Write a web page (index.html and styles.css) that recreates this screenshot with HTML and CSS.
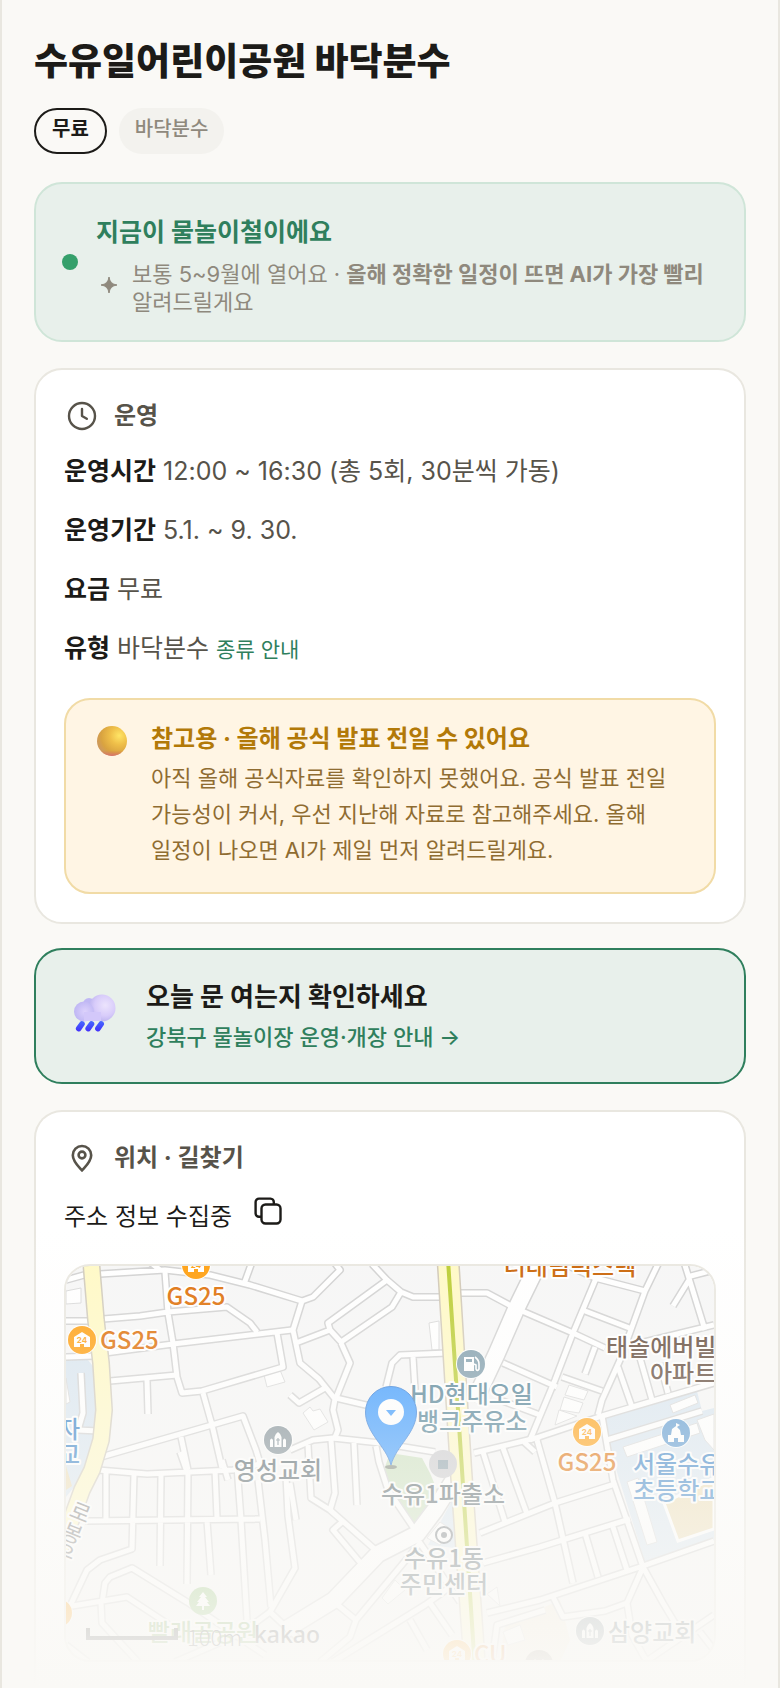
FILE: index.html
```html
<!DOCTYPE html>
<html lang="ko">
<head>
<meta charset="utf-8">
<meta name="viewport" content="width=device-width, initial-scale=1">
<title>수유일어린이공원 바닥분수</title>
<link rel="stylesheet" href="styles.css">
</head>
<body>
<main class="page">
  <h1 class="title">수유일어린이공원 바닥분수</h1>
  <div class="chips">
    <span class="chip chip-free">무료</span>
    <span class="chip">바닥분수</span>
  </div>

  <section class="season">
    <span class="season-dot"></span>
    <div class="season-body">
      <h2 class="season-title">지금이 물놀이철이에요</h2>
      <div class="season-note">
        <svg class="spark" viewBox="0 0 16 16" aria-hidden="true"><path d="M8 0 Q8.8 7.2 16 8 Q8.8 8.8 8 16 Q7.2 8.8 0 8 Q7.2 7.2 8 0Z" fill="#8f897d" stroke="#8f897d"/></svg>
        <p class="season-text">보통 5~9월에 열어요 · <strong>올해 정확한 일정이 뜨면 AI가 가장 빨리</strong> 알려드릴게요</p>
      </div>
    </div>
  </section>

  <section class="card">
    <h2 class="card-title">
      <svg class="card-icon" viewBox="0 0 36 36" fill="none" stroke="#57534a" stroke-width="2.4" stroke-linecap="round" stroke-linejoin="round" aria-hidden="true"><circle cx="18" cy="18" r="13"/><path d="M18 11v7l4.8 2.8"/></svg>
      운영
    </h2>
    <dl class="facts">
      <div class="fact"><dt>운영시간</dt> <dd>12:00 ~ 16:30 (총 5회, 30분씩 가동)</dd></div>
      <div class="fact"><dt>운영기간</dt> <dd>5.1. ~ 9. 30.</dd></div>
      <div class="fact"><dt>요금</dt> <dd>무료</dd></div>
      <div class="fact"><dt>유형</dt> <dd>바닥분수 <a class="kind-link" href="#kinds">종류 안내</a></dd></div>
    </dl>
    <div class="notice">
      <svg class="notice-icon" viewBox="0 0 30 30" aria-hidden="true">
        <defs>
          <radialGradient id="orb" cx=".74" cy=".32" r=".75"><stop offset="0" stop-color="#ffe566"/><stop offset=".4" stop-color="#efbf49"/><stop offset=".8" stop-color="#d9a340"/><stop offset="1" stop-color="#cf9a5a"/></radialGradient>
          <linearGradient id="orbLow" x1="0" y1="0" x2="0" y2="1"><stop offset=".82" stop-color="#d97757" stop-opacity="0"/><stop offset="1" stop-color="#d97070"/></linearGradient>
        </defs>
        <circle cx="15" cy="15" r="15" fill="url(#orb)"/><circle cx="15" cy="15" r="15" fill="url(#orbLow)"/>
      </svg>
      <div>
        <h3 class="notice-title">참고용 · 올해 공식 발표 전일 수 있어요</h3>
        <p class="notice-text">아직 올해 공식자료를 확인하지 못했어요. 공식 발표 전일 가능성이 커서, 우선 지난해 자료로 참고해주세요. 올해 일정이 나오면 AI가 제일 먼저 알려드릴게요.</p>
      </div>
    </div>
  </section>

  <a class="check" href="#official">
    <svg class="check-icon" viewBox="0 0 42 38" aria-hidden="true">
      <defs>
        <radialGradient id="cl1" cx=".62" cy=".4" r=".65"><stop offset="0" stop-color="#ece4fd"/><stop offset=".6" stop-color="#d8ccfa"/><stop offset="1" stop-color="#b9b1ee"/></radialGradient>
        <radialGradient id="cl2" cx=".55" cy=".5" r=".6"><stop offset="0" stop-color="#ddd2fc"/><stop offset="1" stop-color="#bcb4f3"/></radialGradient>
        <linearGradient id="drop" x1="0" y1="0" x2="0" y2="1"><stop offset="0" stop-color="#4468ff"/><stop offset="1" stop-color="#4431fa"/></linearGradient>
      </defs>
      <circle cx="15" cy="10" r="6" fill="#c0b8f4"/>
      <path d="M10 17h22v10H10z" fill="#d4c9fa"/>
      <circle cx="28" cy="14" r="13.500" fill="url(#cl1)"/>
      <circle cx="10" cy="17.500" r="10" fill="url(#cl2)"/>
      <path d="M10 18h17v9H10z" fill="#d3c8fa"/>
      <g fill="url(#drop)">
        <path d="M2.300 33 5.800 28.300a2.800 2.800 0 0 1 4.800 2.800L7.200 36A2.800 2.800 0 0 1 2.300 33Z"/>
        <path d="M11.800 33 15.300 28.300a2.800 2.800 0 0 1 4.800 2.800L16.700 36A2.800 2.800 0 0 1 11.800 33Z"/>
        <path d="M21.500 33 25 28.300a2.800 2.800 0 0 1 4.800 2.800L26.400 36A2.800 2.800 0 0 1 21.500 33Z"/>
      </g>
    </svg>
    <span class="check-body">
      <span class="check-title">오늘 문 여는지 확인하세요</span>
      <span class="check-sub">강북구 물놀이장 운영·개장 안내 →</span>
    </span>
  </a>

  <section class="card card-place">
    <h2 class="card-title">
      <svg class="card-icon" viewBox="0 0 36 36" fill="none" stroke="#57534a" stroke-width="2.600" stroke-linejoin="round" aria-hidden="true"><path d="M18 30.500C14 26 8.800 21.300 8.800 15.200a9.200 9.200 0 0 1 18.400 0C27.200 21.300 22 26 18 30.500Z"/><circle cx="18" cy="15" r="3.400"/></svg>
      위치 · 길찾기
    </h2>
    <div class="address">
      <span>주소 정보 수집중</span>
      <button class="copy" type="button" aria-label="주소 복사"><svg viewBox="0 0 28 28" fill="none" stroke="#1c1b18" stroke-width="2.400" stroke-linejoin="round" aria-hidden="true"><rect x="7.500" y="7.500" width="19" height="19" rx="4"/><path d="M7.500 19.800H5A3.400 3.400 0 0 1 1.600 16.500V5A3.400 3.400 0 0 1 5 1.600H16.500A3.400 3.400 0 0 1 19.800 5V7.500"/></svg></button>
    </div>
    <div class="map">
      <svg class="map-art" viewBox="66 1266 648 394" preserveAspectRatio="xMidYMid slice" role="img" aria-label="지도">
        <defs>
          <g id="lanes">
            <path d="M66 1280L84 1275M100 1274L165 1270L210 1275L250 1285L302 1301L313 1297L340 1270L334 1262M150 1262L160 1270M244 1284L252 1262"/>
            <path d="M165 1272L168 1313L173 1343L177 1377L182 1393L202 1391L283 1367L277 1333M103 1319L140 1316L168 1312L227 1307L250 1323L257 1332M105 1353L173 1344L292 1330M110 1381L177 1375M147 1380L148 1414"/>
            <path d="M101 1457L243 1416L256 1450L262 1470M203 1393L212 1425L222 1468M181 1437L188 1470M66 1321L92 1321M66 1357L94 1356M81 1373L83 1413L78 1430L98 1431"/>
            <path d="M302 1301L293 1330L300 1363L319 1379L335 1399L333 1410L338 1430L334 1440M296 1343L330 1330L328 1323L387 1280L372 1264M387 1280L401 1292L413 1297L442 1297M401 1292L392 1307L341 1342L330 1330M341 1343L350 1363L336 1398"/>
            <path d="M386 1387L392 1363L400 1355L447 1353M413 1357L415 1390M336 1398L370 1406M290 1395L299 1403L325 1388M290 1450L313 1440L333 1438L380 1443L435 1452"/>
            <path d="M308 1445L311 1498L330 1510L379 1553M331 1440L335 1493L330 1510M354 1443L357 1505M376 1446L379 1462L388 1490L417 1533M342 1522L333 1530L364 1567"/>
            <path d="M334 1602L356 1620L350 1637L320 1662M356 1620L420 1543L460 1602M333 1662L425 1605L457 1582M410 1620L427 1650M430 1603L452 1635"/>
            <path d="M98 1470L147 1474L233 1470L260 1464M85 1521L260 1519M106 1472V1520M134 1474L132 1549L100 1560L87 1570L70 1606M161 1474L160 1566M188 1472L187 1584M180 1452L187 1472M215 1470L217 1518M207 1521L211 1575M222 1460L228 1480M237 1466L241 1520L247 1620M258 1480L265 1540L271 1607M286 1476L288 1516L295 1568L270 1612L300 1640M290 1483L296 1520"/>
            <path d="M66 1607L127 1597L200 1645M102 1603L105 1583L110 1577L132 1568L187 1602L265 1655M101 1603L102 1623L138 1662M270 1612L240 1634L175 1662M66 1645L88 1662"/>
            <path d="M460 1293L487 1293L515 1308L573 1333L605 1348M503 1363L557 1387M597 1276L573 1333L555 1380L530 1440M560 1262L595 1278L645 1291M660 1260L645 1291L620 1360L602 1400L598 1415M585 1311L632 1329M595 1347L585 1374M562 1377L602 1391"/>
            <path d="M684 1262L705 1330M689 1280L673 1306M687 1277L714 1270M632 1345L714 1325M618 1367L632 1407M640 1358L652 1400M660 1363L668 1393M530 1440L602 1416L714 1383M607 1440L702 1411M474 1453L540 1437"/>
            <path d="M480 1533L555 1503L615 1484M483 1563L540 1547L630 1519M487 1613L540 1600L640 1567L714 1541M483 1452L505 1522M503 1448L527 1514M524 1442L535 1452M537 1440L555 1503L573 1583M585 1533L598 1577M613 1527L627 1570M602 1416L613 1480L643 1567"/>
            <path d="M643 1567L627 1603L605 1611L563 1617L553 1597M643 1567L663 1603L675 1623M627 1603L632 1635L647 1662M645 1662L714 1615M700 1632L714 1650M492 1662L497 1625L545 1610M500 1400L540 1415"/>
          </g>
          <g id="mains"><path d="M541 1258L517 1307L497 1353L474 1402M285 1630L334 1600L378 1554L417 1534L435 1510L455 1478"/></g>
          <g id="store"><circle r="15" fill="#fff"/><circle r="14" fill="#ff9d0a"/><path d="M-8 6V-3L0-8 8-3V7H2V4H-2V7H-8Z" fill="#fff"/><text y="3" text-anchor="middle" class="map-24">24</text></g>
          <g id="church"><circle r="15" fill="#fff"/><circle r="14" fill="#7b8a92"/><path d="M-3.500 7V-3Q-3-6 0-8 3-6 3.500-3V7ZM-8 7V0q1.500-3 3 0V7ZM5 7V0q1.500-3 3 0V7Z" fill="#fff"/><path d="M0-2V5M-2 0H2" stroke="#7b8a92" stroke-width="1.200"/></g>
        </defs>
        <rect x="60" y="1255" width="660" height="412" fill="#f6f6f6"/>
        <path d="M66 1360H88L96 1370 98 1430 92 1455 84 1475 66 1497ZM602 1417 697 1391 702 1411 714 1408V1540L645 1562 607 1440ZM455 1495V1548L428 1545Z" fill="#d8e5f0"/>
        <path d="M390 1453 422 1458 430 1473 437 1490V1507L418 1531 396 1503 382 1475Z" fill="#c9dfbc"/>
        <path d="M664 1503 714 1478V1529L678 1541Z" fill="#ecdcb2" stroke="#fff" stroke-width="3"/>
        <path d="M66 1466l6 20-6 4Z" fill="#ecdcb2"/>
        <path d="M505 1625 560 1600 570 1640 560 1662H500Z" fill="#f3ead8"/>
        <g fill="#fff" stroke="#d8d8d8">
          <path d="M66 1291 81 1288V1303L66 1304ZM264 1375 280 1370 285 1382 267 1387ZM429 1323 439 1321V1350L432 1350ZM303 1413 310 1407 313 1411 320 1409 328 1422 314 1430ZM569 1385 588 1391 584 1400 565 1395ZM564 1397 583 1403 579 1413 560 1410ZM559 1410 577 1416 555 1425ZM66 1378l4 24-4 2Z"/>
          <path d="M627 1482 638 1478 657 1542 647 1545ZM670 1405 695 1395 698 1403 673 1413ZM623 1447 697 1423 700 1433 627 1457ZM697 1420 714 1414V1450L705 1440ZM440 1522 452 1530 440 1545 427 1538ZM382 1598 395 1580 405 1590 388 1604ZM487 1594 497 1587 500 1606ZM503 1632 520 1625 525 1640 508 1645Z"/>
        </g>
        <use href="#mains" class="road main-edge"/>
        <use href="#lanes" class="road lane-edge"/>
        <use href="#mains" class="road main-fill"/>
        <use href="#lanes" class="road lane-fill"/>
        <path d="M91 1260L96 1320L101 1363L104 1410L101 1440L92 1470L82 1490L64 1540L50 1570" class="road avenue-side-edge"/>
        <path d="M91 1260L96 1320L101 1363L104 1410L101 1440L92 1470L82 1490L64 1540L50 1570" class="road avenue-side"/>
        <path d="M448 1260L461 1470L475 1670" class="road avenue-edge"/>
        <path d="M448 1260L461 1470L475 1670" class="road avenue"/>
        <path d="M448 1260L462 1470L475 1670" class="road avenue-line"/>

        <use href="#store" x="196" y="1265"/>
        <use href="#store" x="82" y="1340"/>
        <use href="#store" x="587" y="1432"/>
        <use href="#store" x="457" y="1654"/>
        <use href="#store" x="58" y="1613"/>
        <use href="#church" x="278" y="1440"/>
        <use href="#church" x="590" y="1631"/>
        <circle cx="539" cy="1664" r="14" fill="#8a7c6c"/><path d="M531 1664l4-5 4 4 4-4 4 5Z" fill="#fff"/>
        <circle cx="471" cy="1364" r="15" fill="#fff"/><circle cx="471" cy="1364" r="14" fill="#7b9aa9"/>
        <path d="M464 1357H474V1371H464Z" fill="#fff"/><path d="M466 1359H472V1362H466Z" fill="#7b9aa9"/><path d="M475 1357q4 3 4 7v5q-2 3-3 0v-4l-2-1" fill="none" stroke="#fff" stroke-width="1.600"/>
        <circle cx="443" cy="1464" r="14" fill="#c8c8cc"/><rect x="438" y="1460" width="10" height="9" fill="#859aa5"/>
        <circle cx="444" cy="1535" r="8" fill="#fff" stroke="#6d7479" stroke-width="2"/><circle cx="444" cy="1535" r="3" fill="#6d7479"/>
        <circle cx="676" cy="1433" r="15" fill="#fff"/><circle cx="676" cy="1433" r="14" fill="#5796cf"/><path d="M668 1442V1435H671L672 1429 676 1426V1423L680 1425 677 1427 680 1430 681 1435H684V1442H678V1438H674V1442Z" fill="#fff"/>
        <circle cx="203" cy="1601" r="14" fill="#8cc070"/><path d="M203 1592l4 5h-2l4 5h-2l3 4h-6v4h-2v-4h-6l3-4h-2l4-5h-2Z" fill="#fff"/>

        <g class="map-label">
          <g fill="#dd6b00" text-anchor="middle"><text x="196" y="1305">GS25</text><text x="587" y="1471">GS25</text><text x="570" y="1275" fill="#c86000">더대림럭스텍</text></g>
          <g fill="#dd6b00"><text x="100" y="1349">GS25</text><text x="474" y="1663">CU</text></g>
          <g fill="#5d4536"><text x="606" y="1356">태솔에버빌</text><text x="650" y="1382">아파트</text></g>
          <g fill="#4c7d92"><text x="410" y="1403">HD현대오일</text><text x="417" y="1430">뱅크주유소</text></g>
          <g fill="#4c5c63" text-anchor="middle"><text x="278" y="1479">영성교회</text><text x="443" y="1503">수유1파출소</text><text x="444" y="1567">수유1동</text><text x="444" y="1593">주민센터</text></g>
          <text x="608" y="1641" fill="#4c5c63">삼양교회</text>
          <g fill="#2f7cc4"><text x="633" y="1473">서울수유</text><text x="633" y="1499">초등학교</text><text x="58" y="1438">자</text><text x="58" y="1463">교</text></g>
          <text x="203" y="1641" text-anchor="middle" fill="#6da04c">빨래골공원</text>
          <g fill="#777" class="map-street"><text transform="translate(68 1516) rotate(22)">로</text><text transform="translate(60 1537) rotate(22)">봉</text><text transform="translate(52 1557) rotate(22)">우</text></g>
        </g>
        <path d="M88 1628V1638H176V1628" fill="none" stroke="#333" stroke-width="4"/>
        <text x="187" y="1646" class="map-scale">100m</text>
        <text x="254" y="1643" class="map-brand">kakao</text>

        <ellipse cx="391" cy="1467" rx="6" ry="2" fill="#444" opacity=".6"/>
        <path d="M391 1465C386 1446 365.500 1433 365.500 1412a25.500 25.500 0 0 1 51 0C416.500 1433 396 1446 391 1465Z" fill="#3396ff" stroke="#2978d8"/>
        <circle cx="391" cy="1412" r="13" fill="#fff"/><path d="M386 1410H396L391 1416Z" fill="#3396ff"/>
      </svg>
    </div>
  </section>
  <div class="fade"></div>
</main>
</body>
</html>
```

FILE: styles.css
```css
* { box-sizing: border-box; }

body {
  margin: 0;
  background: #faf9f6;
  color: #1c1b18;
  font-family: Inter, "Noto Sans CJK KR", sans-serif;
}

h1, h2, h3, p, dl, dd { margin: 0; }
a { color: inherit; text-decoration: none; }

.page {
  position: relative;
  display: flex;
  flex-direction: column;
  min-height: 100vh;
  padding: 36px 32px 0;
  border: solid #e9e7e0;
  border-width: 0 2px;
}

.title { font-size: 37px; line-height: 52px; font-weight: 800; }

.chips { display: flex; gap: 12px; margin-top: 20px; }
.chip {
  height: 46px;
  padding: 0 16px;
  border-radius: 23px;
  background: #f3f2ee;
  color: #8f897d;
  font-size: 20px;
  line-height: 42px;
  font-weight: 500;
}
.chip-free {
  border: 2px solid #1c1b18;
  background: none;
  color: #1c1b18;
  line-height: 38px;
  font-weight: 700;
}

.season {
  display: flex;
  align-items: center;
  gap: 18px;
  margin-top: 28px;
  padding: 24px 26px;
  border: 2px solid #cfe5d8;
  border-radius: 28px;
  background: #e8f0eb;
}
.season-dot { flex: none; width: 16px; height: 16px; border-radius: 50%; background: #35a06b; }
.season-title { color: #2f7f5d; font-size: 25px; line-height: 48px; font-weight: 700; }
.season-note { display: flex; align-items: center; gap: 15px; margin-top: 4px; padding-left: 5px; color: #8f897d; }
.spark { flex: none; width: 16px; height: 16px; margin-bottom: 6px; }
.season-text { font-size: 22px; line-height: 28px; word-break: keep-all; }

.card {
  margin-top: 26px;
  padding: 26px 28px 28px;
  border: 2px solid #e9e7e0;
  border-radius: 28px;
  background: #fff;
}
.card-title {
  display: flex;
  align-items: center;
  gap: 14px;
  color: #57534a;
  font-size: 24px;
  line-height: 40px;
  font-weight: 700;
}
.card-icon { width: 36px; height: 36px; }

.facts { display: grid; gap: 17px; margin-top: 14px; }
.fact { font-size: 25px; line-height: 42px; color: #57534a; }
.fact dt, .fact dd { display: inline; }
.fact dt { color: #1c1b18; font-weight: 700; }
.kind-link { color: #2f7f5d; font-size: 21px; line-height: 24px; }

.notice {
  display: flex;
  gap: 24px;
  margin-top: 29px;
  padding: 20px 31px 24px;
  border: 2px solid #f1dba6;
  border-radius: 26px;
  background: #fff5e4;
}
.notice-icon { flex: none; width: 30px; height: 30px; margin-top: 6px; }
.notice-title { color: #b27908; font-size: 24px; line-height: 38px; font-weight: 700; }
.notice-text { margin-top: 2px; color: #8f6c31; font-size: 22px; line-height: 36px; word-break: keep-all; }

.check {
  display: flex;
  align-items: center;
  gap: 30px;
  margin-top: 24px;
  padding: 25px 38px;
  border: 2px solid #2f7f5d;
  border-radius: 28px;
  background: #e8f0eb;
}
.check-icon { flex: none; width: 42px; height: 38px; margin-bottom: 6px; }
.check-body { display: grid; padding-top: 2px; }
.check-title { font-size: 26px; line-height: 40px; font-weight: 700; }
.check-sub { color: #2f7f5d; font-size: 22px; line-height: 40px; font-weight: 500; }

.card-place { padding-bottom: 24px; border-bottom: 0; border-radius: 28px 28px 0 0; }
.address { display: flex; gap: 22px; margin-top: 19px; font-size: 24px; line-height: 40px; }
.copy { width: 28px; height: 28px; padding: 0; border: 0; background: none; }
.copy svg { display: block; width: 28px; height: 28px; }

.map {
  margin-top: 27px;
  overflow: hidden;
  border: 2px solid #e9e7e0;
  border-radius: 26px;
}
.map-art { display: block; width: 100%; height: auto; }
.road { fill: none; stroke-linejoin: round; }
.lane-edge { stroke: #d0d0d0; stroke-width: 8px; }
.lane-fill { stroke: #fff; stroke-width: 5px; }
.main-edge { stroke: #d0d0d0; stroke-width: 19px; }
.main-fill { stroke: #fff; stroke-width: 16px; }
.avenue-side-edge { stroke: #cfc9ba; stroke-width: 18px; }
.avenue-side { stroke: #fff9c4; stroke-width: 15px; }
.avenue-edge { stroke: #cfc6b4; stroke-width: 23px; }
.avenue { stroke: #fff9c4; stroke-width: 20px; }
.avenue-line { stroke: #b8cb2c; stroke-width: 4px; }
.map-label {
  font: 500 24px "Noto Sans CJK KR", sans-serif;
  stroke: #fff;
  stroke-width: 4px;
  stroke-linejoin: round;
  paint-order: stroke;
}
.map-street { font-size: 22px; font-weight: 400; }
.map-24 { font: 700 8px Inter, sans-serif; fill: #ff9d0a; }
.map-scale { font: 300 22px "Noto Sans CJK KR", sans-serif; fill: #333; }
.map-brand { font: 500 23px "Noto Sans", sans-serif; fill: #333; }

.fade {
  position: absolute;
  right: 0;
  bottom: 0;
  left: 0;
  height: 460px;
  background: linear-gradient(rgba(250, 249, 246, 0), #faf9f6);
  pointer-events: none;
}
```
